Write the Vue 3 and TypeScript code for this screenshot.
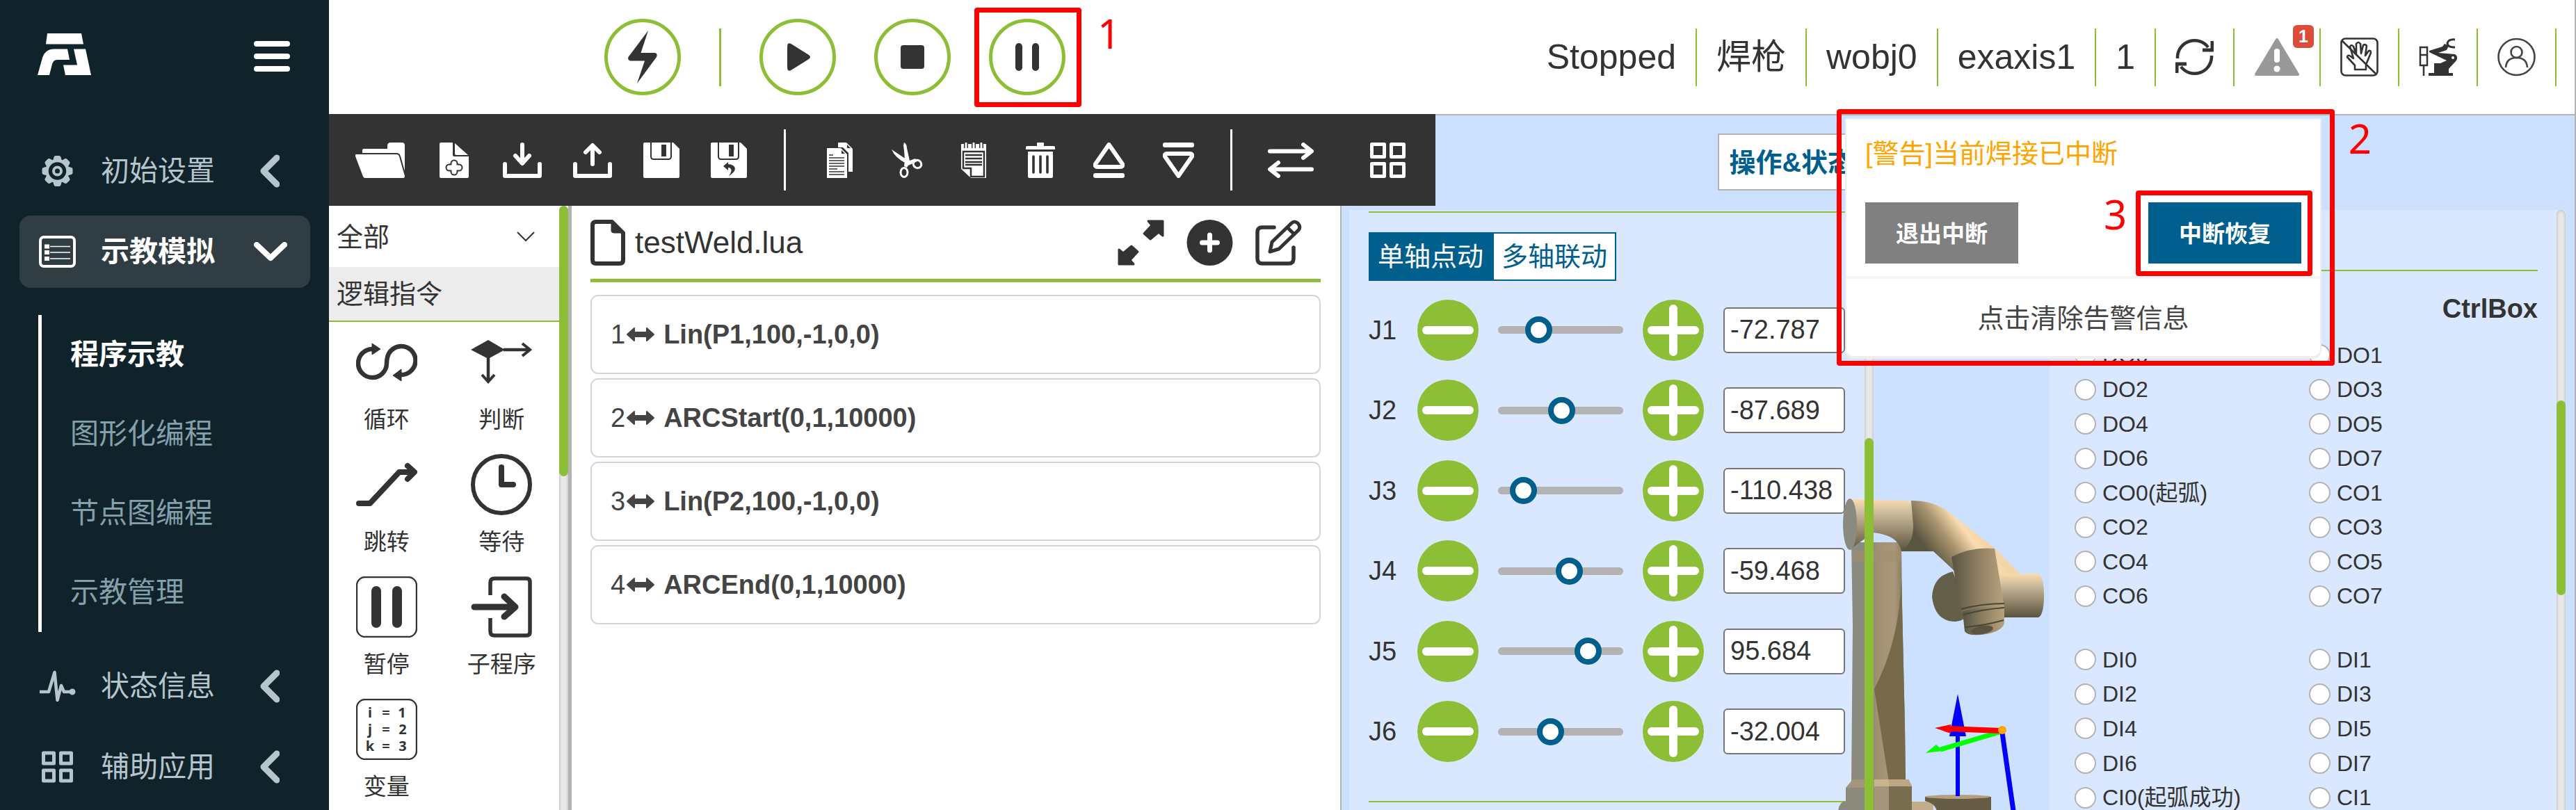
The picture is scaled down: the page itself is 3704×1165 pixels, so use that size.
<script setup lang="ts">
import { ref } from 'vue'

interface Icon {
  name: string
  w: number
  body: string
}

interface Joint {
  name: string
  pos: number
  value: string
}

const INK = '#333'

const subMenu = ['程序示教', '图形化编程', '节点图编程', '示教管理']

const floppy =
  '<path fill="#fff" d="M2 0H43L52 9V49q0 2-2 2H2q-2 0-2-2V2q0-2 2-2Z"/>' +
  `<path fill="none" stroke="${INK}" stroke-width="2" d="M11 0V20q0 4 4 4H36q4 0 4-4V0"/>` +
  `<path fill="${INK}" d="M26 3h7v17h-7z"/>`

const fileTools: Icon[] = [
  {
    name: '打开',
    w: 76,
    body:
      '<path fill="#fff" d="M10 16V11q0-2 2-2H46V5q0-5 5-5H67q4 0 4 4V42L63 16Z"/>' +
      `<path fill="#fff" stroke="${INK}" stroke-width="2" d="M1 16H59q4 0 5 4L72 48q0 4-3 4H14q-3 0-4-3L-1 20q-1-4 2-4Z"/>`,
  },
  {
    name: '新建',
    w: 46,
    body:
      '<path fill="#fff" d="M2 0H19V18q0 2 2 2H42V49q0 2-2 2H2q-2 0-2-2V2q0-2 2-2ZM22 1L41 18H24q-2 0-2-2Z"/>' +
      `<path stroke="${INK}" stroke-width="11" stroke-linecap="round" d="M14 36H28M21 30V42"/>` +
      '<path stroke="#fff" stroke-width="7" stroke-linecap="round" d="M14 36H28M21 30V42"/>',
  },
  {
    name: '导入',
    w: 56,
    body: '<path fill="none" stroke="#fff" stroke-width="6" stroke-linecap="round" stroke-linejoin="round" d="M3 31V48H53V31M28 3V28M18 19L28 30L38 19"/>',
  },
  {
    name: '导出',
    w: 56,
    body: '<path fill="none" stroke="#fff" stroke-width="6" stroke-linecap="round" stroke-linejoin="round" d="M3 31V48H53V31M28 6V31M18 14L28 4L38 14"/>',
  },
  { name: '保存', w: 52, body: floppy },
  {
    name: '另存为',
    w: 52,
    body:
      floppy +
      `<path fill="${INK}" d="M18 34L25 28V31Q35 32 35 38Q34 43 26 48Q31 41 29 38Q28 36 25 36V40Z"/>`,
  },
]

const editTools: Icon[] = [
  {
    name: '复制',
    w: 37,
    body:
      '<path fill="#fff" d="M16 0H28L37 9V42H31V15L23 7H16Z"/><path fill="#fff" d="M0 8H20L29 17V51H0Z"/>' +
      `<path fill="${INK}" d="M29 3V8H34ZM21 11V16H26Z"/>` +
      `<path stroke="${INK}" stroke-width="1.4" d="M3 18H9M3 22H25M3 26H25M3 30H25M3 34H25M3 38H15M3 42H25M3 46H25"/>`,
  },
  {
    name: '剪切',
    w: 46,
    body:
      '<path fill="#fff" d="M19 0Q23 2 23 8L27 26L35 23L38 27L25 33L23 36L19 34Q21 24 18 4ZM1 10L25 26L22 30Q6 22 1 10Z"/>' +
      '<ellipse cx="19" cy="43" rx="5" ry="6.5" fill="none" stroke="#fff" stroke-width="3"/>' +
      '<ellipse cx="38" cy="31" rx="6" ry="5.5" transform="rotate(35 38 31)" fill="none" stroke="#fff" stroke-width="3"/>',
  },
  {
    name: '粘贴',
    w: 38,
    body:
      '<path fill="#fff" d="M0 2H36V51H14L0 38Z"/>' +
      `<path fill="none" stroke="${INK}" stroke-width="6" d="M7 0V8M18 0V8M29 0V8"/>` +
      '<path stroke="#fff" stroke-width="3" stroke-linecap="round" d="M7 1V8M18 1V8M29 1V8"/>' +
      `<path fill="none" stroke="${INK}" stroke-width="2.5" d="M3 13H33V49H14V37H3ZM6 18H30M6 23H30M6 28H30M6 32H30"/>`,
  },
  {
    name: '删除',
    w: 42,
    body:
      '<path fill="#fff" d="M16 5V1q0-1 1-1H25q1 0 1 1V5H40q2 0 2 2V10H0V7q0-2 2-2ZM3 13H39V49q0 2-2 2H5q-2 0-2-2Z"/>' +
      `<path stroke="${INK}" stroke-width="3.6" stroke-linecap="round" d="M11 20V43M21 20V43M31 20V43"/>`,
  },
  {
    name: '上移',
    w: 45,
    body: '<path fill="none" stroke="#fff" stroke-width="6" stroke-linejoin="round" d="M22.500 3L42 31q1 4-3 4H6q-4 0-3-4Z"/><rect y="44" width="45" height="7" rx="3" fill="#fff"/>',
  },
  {
    name: '下移',
    w: 45,
    body: '<path fill="none" stroke="#fff" stroke-width="6" stroke-linejoin="round" d="M22.500 48L42 20q1-4-3-4H6q-4 0-3 4Z"/><rect width="45" height="7" rx="3" fill="#fff"/>',
  },
]

const swapIcon =
  '<path fill="none" stroke="#fff" stroke-width="6" stroke-linecap="round" stroke-linejoin="round" d="M3 12.500H62M51 3L63 12.500L51 22M63 38.500H4M15 29L3 38.500L15 48"/>'
const gridIcon =
  '<path fill="none" stroke="#fff" stroke-width="5" stroke-linejoin="round" d="M2.500 2.500H20.500V20.500H2.500ZM30.500 2.500H48.500V20.500H30.500ZM2.500 30.500H20.500V48.500H2.500ZM30.500 30.500H48.500V48.500H30.500Z"/>'

const stroke = `fill="none" stroke="${INK}"`
const commands: { name: string; body: string }[] = [
  {
    name: '循环',
    body:
      `<path ${stroke} stroke-width="6.500" d="M24 25A20.500 20.500 0 1 0 44 46Q44 41 45 37A20.500 20.500 0 1 1 64 62"/>` +
      `<path fill="${INK}" stroke="${INK}" stroke-linejoin="round" d="M23 17L35 25L23 33ZM65 54L53 63L65 71Z"/>`,
  },
  {
    name: '判断',
    body:
      `<path fill="${INK}" d="M0 26L25 12L49 26L25 39Z"/>` +
      `<path ${stroke} stroke-width="4.500" d="M47 26H84M25 38V72"/>` +
      `<path ${stroke} stroke-width="4" d="M74 17L85 26L74 35M16 62L25 72L34 62"/>`,
  },
  {
    name: '跳转',
    body: `<path ${stroke} stroke-width="8" stroke-linecap="round" stroke-linejoin="round" d="M4 71H20L62 26H82M74 17L84 26L74 36"/>`,
  },
  {
    name: '等待',
    body:
      `<circle cx="44" cy="44" r="41" ${stroke} stroke-width="6"/>` +
      `<path ${stroke} stroke-width="8" stroke-linecap="round" stroke-linejoin="round" d="M44 19V44H61"/>`,
  },
  {
    name: '暂停',
    body:
      `<rect x="1" y="1" width="86" height="86" rx="12" ${stroke} stroke-width="2.400"/>` +
      `<path fill="${INK}" d="M22 21a7 7 0 0 1 14 0V67a7 7 0 0 1-14 0ZM52 21a7 7 0 0 1 14 0V67a7 7 0 0 1-14 0Z"/>`,
  },
  {
    name: '子程序',
    body:
      `<path ${stroke} stroke-width="5.500" d="M28 27V9q0-6 6-6H80q5 0 5 5V80q0 5-5 5H34q-6 0-6-6V60"/>` +
      `<path ${stroke} stroke-width="9" stroke-linecap="round" stroke-linejoin="round" d="M5 44H62M48 29L64 44L48 58"/>`,
  },
  {
    name: '变量',
    body:
      `<rect x="1" y="1" width="86" height="86" rx="12" ${stroke} stroke-width="2.400"/>` +
      `<g fill="${INK}" font-family="Noto Sans, sans-serif" font-size="20" font-weight="700" text-anchor="middle">` +
      '<text x="20" y="27">i</text><text x="43" y="27">=</text><text x="66" y="27">1</text>' +
      '<text x="20" y="51">j</text><text x="43" y="51">=</text><text x="67" y="51">2</text>' +
      '<text x="20" y="75">k</text><text x="43" y="75">=</text><text x="67" y="75">3</text></g>',
  },
]

const program = ['Lin(P1,100,-1,0,0)', 'ARCStart(0,1,10000)', 'Lin(P2,100,-1,0,0)', 'ARCEnd(0,1,10000)']

const joints = ref<Joint[]>([
  { name: 'J1', pos: 28, value: '-72.787' },
  { name: 'J2', pos: 51, value: '-87.689' },
  { name: 'J3', pos: 12, value: '-110.438' },
  { name: 'J4', pos: 59, value: '-59.468' },
  { name: 'J5', pos: 78, value: '95.684' },
  { name: 'J6', pos: 40, value: '-32.004' },
])

const outputs = [
  'DO0', 'DO1', 'DO2', 'DO3', 'DO4', 'DO5', 'DO6', 'DO7',
  'CO0(起弧)', 'CO1', 'CO2', 'CO3', 'CO4', 'CO5', 'CO6', 'CO7',
]
const inputs = ['DI0', 'DI1', 'DI2', 'DI3', 'DI4', 'DI5', 'DI6', 'DI7', 'CI0(起弧成功)', 'CI1']

const mode = ref<'single' | 'multi'>('single')
</script>

<template>
  <div class="app">
    <aside class="sidebar">
      <div class="brand">
        <svg width="77" height="60" viewBox="0 0 77 60" fill="#fff" role="img" aria-label="FR">
          <path d="M14 0H63L66 15.500H12Z" />
          <path d="M0 60L7 35Q11 22.400 24 22.400H43L46 38H28Q23 38 21 44L17 60Z" />
          <path d="M52 22.400H69L77 60H40L37 45.500H57Z" />
        </svg>
        <button class="burger" aria-label="菜单">
          <svg width="52" height="44" viewBox="0 0 52 44" stroke="#fff" stroke-width="8" stroke-linecap="round">
            <path d="M4 4H48M4 22H48M4 40H48" />
          </svg>
        </button>
      </div>
      <nav class="menu">
        <a href="#" class="item">
          <svg width="53" height="46" viewBox="-26.500 -23 53 46" fill="none" stroke="currentColor">
            <circle r="15" stroke-width="4.500" />
            <circle r="5.500" stroke-width="4" />
            <path
              v-for="a in 8"
              :key="a"
              :transform="`rotate(${a * 45})`"
              d="M-3.500 -16L-2.500 -19.500H2.500L3.500 -16Z"
              stroke-width="5"
              stroke-linejoin="round"
            />
          </svg>
          <span>初始设置</span>
          <svg class="chev" width="28" height="48" viewBox="0 0 28 48" fill="none" stroke="currentColor" stroke-width="9" stroke-linecap="round" stroke-linejoin="round">
            <path d="M24 5L5 24L24 43" />
          </svg>
        </a>
        <a href="#" class="item active">
          <svg width="53" height="46" viewBox="0 0 53 46" fill="none" stroke="currentColor">
            <rect x="2" y="2" width="49" height="42" rx="5" stroke-width="4" />
            <path d="M8 15.500H15M8 24H15M8 33H15" stroke-width="6" />
            <path d="M16 15.500H45M16 24H45M16 33H45" stroke-width="1.600" />
          </svg>
          <span>示教模拟</span>
          <svg class="chev down" width="48" height="28" viewBox="0 0 48 28" fill="none" stroke="currentColor" stroke-width="8" stroke-linecap="round" stroke-linejoin="round">
            <path d="M4 4L24 23L44 4" />
          </svg>
        </a>
        <div class="submenu">
          <a v-for="(s, i) in subMenu" :key="s" href="#" :class="{ on: i === 0 }">{{ s }}</a>
        </div>
        <a href="#" class="item">
          <svg width="53" height="46" viewBox="0 0 53 46" fill="none" stroke="currentColor" stroke-width="4.500" stroke-linejoin="round">
            <path d="M1 31H14L22.500 3L26.500 43L32 22L36 31H48" />
            <circle cx="48" cy="31" r="2.200" />
          </svg>
          <span>状态信息</span>
          <svg class="chev" width="28" height="48" viewBox="0 0 28 48" fill="none" stroke="currentColor" stroke-width="9" stroke-linecap="round" stroke-linejoin="round">
            <path d="M24 5L5 24L24 43" />
          </svg>
        </a>
        <a href="#" class="item">
          <svg width="53" height="46" viewBox="0 0 53 46" fill="none" stroke="currentColor" stroke-width="5" stroke-linejoin="round">
            <path d="M6.500 3H21.500V18H6.500ZM31.500 3H46.500V18H31.500ZM6.500 28H21.500V43H6.500ZM31.500 28H46.500V43H31.500Z" />
          </svg>
          <span>辅助应用</span>
          <svg class="chev" width="28" height="48" viewBox="0 0 28 48" fill="none" stroke="currentColor" stroke-width="9" stroke-linecap="round" stroke-linejoin="round">
            <path d="M24 5L5 24L24 43" />
          </svg>
        </a>
      </nav>
    </aside>

    <div class="main">
      <header class="header">
        <div class="transport">
          <button class="round" aria-label="使能">
            <svg width="42" height="76" viewBox="0 0 42 76" fill="#333">
              <path d="M29 0L18.500 32H39Q43 33 41 38L13 76L24 43.500H3Q-1 42 0.500 38Z" />
            </svg>
          </button>
          <i class="sep"></i>
          <button class="round" aria-label="启动">
            <svg width="40" height="40" viewBox="0 0 40 40" fill="#333">
              <path d="M6 1Q8-1 12 2L36 17Q40 20 36 23L12 38Q8 41 6 39Q5 38 5 34V6Q5 2 6 1Z" />
            </svg>
          </button>
          <button class="round" aria-label="停止">
            <svg width="34" height="34" viewBox="0 0 34 34" fill="#333"><rect width="34" height="34" rx="4" /></svg>
          </button>
          <div class="marked">
            <button class="round" aria-label="暂停">
              <svg width="34" height="40" viewBox="0 0 34 40" fill="#333">
                <rect width="10" height="40" rx="5" /><rect x="24" width="10" height="40" rx="5" />
              </svg>
            </button>
            <div class="callout around-pause"></div>
            <span class="digit digit-one">1</span>
          </div>
        </div>
        <div class="status">
          <span class="cell">Stopped</span>
          <span class="cell">焊枪</span>
          <span class="cell">wobj0</span>
          <span class="cell">exaxis1</span>
          <span class="cell">1</span>
          <span class="cell">
            <button aria-label="刷新">
              <svg width="55" height="56" viewBox="0 0 55 56" fill="none" stroke="#333" stroke-width="4.500">
                <path d="M3 30V27A24.500 24.500 0 0 1 47 14M52 26V29A24.500 24.500 0 0 1 8 42" />
                <path d="M53 5V18H39M2 51V38H16" stroke-width="5" />
              </svg>
            </button>
          </span>
          <span class="cell alert">
            <button aria-label="告警">
              <svg width="66" height="56" viewBox="0 0 66 56">
                <path fill="#999" stroke="#999" stroke-width="4" stroke-linejoin="round" d="M33 3L63 53H3Z" />
                <path stroke="#fff" stroke-width="8" stroke-linecap="round" d="M33 20V32" />
                <circle cx="33" cy="45" r="4.500" fill="#fff" />
              </svg>
            </button>
            <span class="badge">1</span>
            <section class="popup">
              <div class="warn">
                <p>[警告]当前焊接已中断</p>
                <div class="actions">
                  <button class="quit">退出中断</button>
                  <div class="marked">
                    <button class="resume">中断恢复</button>
                    <div class="callout around-resume"></div>
                    <span class="digit digit-three">3</span>
                  </div>
                </div>
              </div>
              <button class="clear">点击清除告警信息</button>
              <div class="callout around-popup"></div>
              <span class="digit digit-two">2</span>
            </section>
          </span>
          <span class="cell">
            <button aria-label="拖动">
              <svg width="55" height="56" viewBox="0 0 55 56" fill="none" stroke="#333" stroke-width="2.600" stroke-linejoin="round">
                <rect x="1.500" y="1.500" width="52" height="53" rx="6" />
                <path d="M3 5L51 52" />
                <path d="M21 46V40L10 28Q11 24 15 27L19 30L14 13Q16 9 19 13L23 24L23 9Q26 5 29 9L30 23L33 11Q36 9 38 12L36 26L41 19Q44 18 44 22L37 39V46Z" />
              </svg>
            </button>
          </span>
          <span class="cell">
            <button aria-label="机器人">
              <svg width="55" height="56" viewBox="0 0 55 56" fill="#333">
                <path d="M15 19L34 13L37 9L43 12L40 18L28 22L52 24Q57 27 54 33L43 45V51H49V55H14V51H22V37H31L40 33L15 21Z" />
                <path d="M52 3Q43 2 41 8Q41 14 52 14" fill="none" stroke="#333" stroke-width="3" />
                <path d="M2 14H12V40H2ZM2 25H12M7 40V55" fill="none" stroke="#333" stroke-width="2.500" />
                <circle cx="49" cy="29" r="2" fill="#fff" />
              </svg>
            </button>
          </span>
          <span class="cell">
            <button aria-label="用户">
              <svg width="55" height="56" viewBox="0 0 55 56" fill="none" stroke="#444" stroke-width="2.600">
                <circle cx="27.500" cy="28" r="26" />
                <circle cx="27.500" cy="21" r="8" />
                <path d="M12 43Q13 29 27.500 29Q42 29 43 43" />
              </svg>
            </button>
          </span>
        </div>
      </header>

      <div class="work">
        <div class="left">
          <div class="toolbar">
            <div class="group files">
              <button v-for="t in fileTools" :key="t.name" :aria-label="t.name">
                <svg :width="t.w" height="51" :viewBox="`0 0 ${t.w} 51`" fill="none" v-html="t.body"></svg>
              </button>
            </div>
            <i class="bar"></i>
            <div class="group edits">
              <button v-for="t in editTools" :key="t.name" :aria-label="t.name">
                <svg :width="t.w" height="51" :viewBox="`0 0 ${t.w} 51`" v-html="t.body"></svg>
              </button>
            </div>
            <i class="bar"></i>
            <div class="group views">
              <button aria-label="切换"><svg width="66" height="51" viewBox="0 0 66 51" v-html="swapIcon"></svg></button>
              <button aria-label="布局"><svg width="51" height="51" viewBox="0 0 51 51" v-html="gridIcon"></svg></button>
            </div>
          </div>

          <div class="panes">
            <div class="toolbox">
              <div class="palette">
                <label class="filter">
                  <select aria-label="指令分类"><option>全部</option></select>
                  <svg width="26" height="16" viewBox="0 0 26 16" fill="none" stroke="#333" stroke-width="2">
                    <path d="M1 2L13 14L25 2" />
                  </svg>
                </label>
                <h2>逻辑指令</h2>
                <div class="cmds">
                  <button v-for="c in commands" :key="c.name">
                    <svg width="88" height="88" viewBox="0 0 88 88" v-html="c.body"></svg>
                    <span>{{ c.name }}</span>
                  </button>
                </div>
              </div>
              <div class="scroll"><i class="thumb thumb-top"></i></div>
            </div>

            <div class="editor">
              <div class="file">
                <svg width="50" height="66" viewBox="0 0 50 66" fill="none" stroke="#333" stroke-width="6" stroke-linejoin="round">
                  <path d="M8 3H31L47 19V58Q47 63 42 63H8Q3 63 3 58V8Q3 3 8 3Z" />
                  <path d="M30 1L48 19H34Q30 19 30 16Z" fill="#333" stroke-width="1" />
                </svg>
                <span class="name">testWeld.lua</span>
                <button aria-label="展开">
                  <svg width="67" height="66" viewBox="0 0 67 66" fill="#333" stroke="#333" stroke-width="3" stroke-linejoin="round">
                    <path d="M44 2H65V23L59 18L47 28L38 20L49 8ZM23 64H2V43L8 48L20 38L29 46L18 58Z" />
                  </svg>
                </button>
                <button aria-label="添加">
                  <svg width="67" height="66" viewBox="0 0 67 66">
                    <circle cx="33.500" cy="33" r="33" fill="#333" />
                    <path stroke="#fff" stroke-width="7" stroke-linecap="round" d="M33.500 22V44M22.500 33H44.500" />
                  </svg>
                </button>
                <button aria-label="编辑">
                  <svg width="67" height="66" viewBox="0 0 67 66" fill="none" stroke="#333" stroke-width="5.500" stroke-linecap="round" stroke-linejoin="round">
                    <path d="M27 11H10Q3 11 3 18V56Q3 63 10 63H48Q55 63 55 56V40" />
                    <path d="M21 46L24 32L52 5Q56 1 61 5Q66 10 62 15L34 42ZM46 11L56 21" stroke-width="5" />
                  </svg>
                </button>
              </div>
              <ol class="lines">
                <li v-for="(line, i) in program" :key="i">
                  <span>{{ i + 1 }}</span>
                  <svg width="44" height="22" viewBox="0 0 44 22" fill="#444">
                    <path d="M3 11L13 2V8H31V2L41 11L31 20V14H13V20Z" stroke="#444" stroke-width="2" stroke-linejoin="round" />
                  </svg>
                  <b>{{ line }}</b>
                </li>
              </ol>
            </div>
          </div>
        </div>

        <div class="right">
          <div class="viewbar">
            <select aria-label="视图"><option>操作&amp;状态</option></select>
          </div>
          <div class="stage">
            <section class="panel">
              <div class="jog">
                <div class="modes">
                  <button :class="{ on: mode === 'single' }" @click="mode = 'single'">单轴点动</button>
                  <button :class="{ on: mode === 'multi' }" @click="mode = 'multi'">多轴联动</button>
                </div>
                <div class="joints">
                  <div v-for="j in joints" :key="j.name" class="joint">
                    <label :for="`val-${j.name}`">{{ j.name }}</label>
                    <button :aria-label="`${j.name} 减`">
                      <svg width="88" height="88" viewBox="0 0 88 88">
                        <circle cx="44" cy="44" r="44" fill="#8cbf36" />
                        <path stroke="#fff" stroke-width="12" stroke-linecap="round" d="M13 44H75" />
                      </svg>
                    </button>
                    <input v-model.number="j.pos" type="range" min="0" max="100" :aria-label="`${j.name} 位置`" />
                    <button :aria-label="`${j.name} 加`">
                      <svg width="88" height="88" viewBox="0 0 88 88">
                        <circle cx="44" cy="44" r="44" fill="#8cbf36" />
                        <path stroke="#fff" stroke-width="12" stroke-linecap="round" d="M13 44H75M44 13V75" />
                      </svg>
                    </button>
                    <input :id="`val-${j.name}`" v-model="j.value" type="text" />
                  </div>
                </div>
                <hr />
              </div>
              <div class="scroll"><i class="thumb thumb-rest"></i></div>
            </section>

            <div class="scene">
              <svg class="robot" width="310" height="466" viewBox="0 0 310 466">
                <defs>
                  <linearGradient id="tube" x1="0" y1="0" x2="0" y2="1">
                    <stop offset="0" stop-color="#fbdcae" /><stop offset=".25" stop-color="#cdbd9f" />
                    <stop offset=".7" stop-color="#8a7d62" /><stop offset="1" stop-color="#58543f" />
                  </linearGradient>
                  <linearGradient id="arm" gradientUnits="userSpaceOnUse" x1="130" y1="90" x2="190" y2="45">
                    <stop offset="0" stop-color="#5a553f" /><stop offset=".45" stop-color="#a8946f" />
                    <stop offset=".8" stop-color="#fbdcae" /><stop offset="1" stop-color="#f3d5a8" />
                  </linearGradient>
                  <linearGradient id="col" x1="0" y1="0" x2="1" y2="0">
                    <stop offset="0" stop-color="#8a8a80" /><stop offset=".42" stop-color="#8e8b7f" />
                    <stop offset=".46" stop-color="#a08f70" /><stop offset=".8" stop-color="#a8977a" />
                    <stop offset="1" stop-color="#807253" />
                  </linearGradient>
                  <linearGradient id="wrist" x1="0" y1="0" x2="1" y2="0">
                    <stop offset="0" stop-color="#575440" /><stop offset=".5" stop-color="#8e7f62" />
                    <stop offset="1" stop-color="#b7a27c" />
                  </linearGradient>
                </defs>
                <path fill="url(#col)" d="M22 80H94L95 170L99 344L100 425H22L24 200Z" />
                <path fill="#766a4b" d="M94 130L95 170L99 344L100 425H76L55 291Q92 220 94 130Z" />
                <path fill="#a28f70" d="M23 92H94V107Q60 110 23 107Z" opacity=".6" />
                <path fill="url(#tube)" d="M20 18L100 20Q112 21 112 30V90L94 93Q90 70 54 66L20 90Z" />
                <path fill="url(#arm)" d="M108 20Q142 20 164 38L228 88L266 127L210 165L168 119L140 93H94Q112 80 111 55Z" />
                <ellipse cx="20" cy="54" rx="10" ry="37" fill="#8a8a80" />
                <path fill="url(#tube)" d="M230 126L291 125Q299 130 299 156Q299 184 291 188H236Z" />
                <path fill="#645f49" d="M168 122Q140 128 138 158Q142 194 172 194Q188 192 190 180Z" />
                <path fill="url(#wrist)" d="M166 101Q195 86 228 89L242 173Q212 172 180 182Z" />
                <path fill="url(#wrist)" d="M182 180Q212 170 242 174V196Q240 207 216 212Q190 216 185 208Z" />
                <path fill="none" stroke="#4b4735" stroke-width="2" d="M180 176Q210 168 242 168M183 184Q212 176 242 174M185 202Q212 200 241 192" />
                <ellipse cx="210" cy="206" rx="16" ry="6" fill="#5c543f" transform="rotate(-10 210 206)" />
                <path fill="#a5967b" d="M24 421H104L109 431V466H14V433Z" />
                <path fill="#7a6e51" d="M76 421H104L109 431V466H76Z" />
                <path fill="#d8c19a" d="M55 421H104L109 431H55Z" opacity=".7" />
                <path fill="#8c8a7d" d="M14 433H55V466H3Q5 453 14 452Z" />
                <path fill="#c2ad89" d="M109 453H140V466H109Z" />
                <path fill="#675d45" d="M128 446H223V466H145Q142 455 128 452Z" />
                <ellipse cx="175" cy="446" rx="47" ry="3" fill="#b3a07c" />
                <path stroke="#00f" stroke-width="6" d="M175 356V445" />
                <path fill="#00f" d="M175 298L187 359H163Z" />
                <path stroke="#00f" stroke-width="7" d="M239 354L255 466" />
                <path stroke="#0f0" stroke-width="7" d="M235 353L150 378" />
                <path fill="#0f0" d="M129 383L144 371L154 380Z" />
                <path stroke="red" stroke-width="8" d="M236 351L160 348" />
                <path fill="red" d="M142 347L165 342V355Z" />
                <circle cx="239" cy="350" r="6" fill="orange" />
              </svg>
            </div>

            <section class="panel">
              <div class="io">
                <hr />
                <h3>CtrlBox</h3>
                <div class="ports outs">
                  <label v-for="p in outputs" :key="p"><input type="radio" :name="p" />{{ p }}</label>
                </div>
                <div class="ports ins">
                  <label v-for="p in inputs" :key="p"><input type="radio" :name="p" />{{ p }}</label>
                </div>
              </div>
              <div class="scroll"><i class="thumb thumb-mid"></i></div>
            </section>
          </div>
        </div>
      </div>
    </div>
  </div>
</template>

<style>
body {
  margin: 0;
  overflow: hidden;
}
</style>

<style scoped>
* {
  box-sizing: border-box;
}
.app {
  display: flex;
  height: 100vh;
  overflow: hidden;
  background: #fff;
  color: #333;
  font-family: 'Liberation Sans', 'Noto Sans CJK SC', sans-serif;
  font-size: 38px;
  line-height: 44px;
}
button {
  display: block;
  margin: 0;
  padding: 0;
  border: 0;
  background: none;
  color: inherit;
  font: inherit;
}
svg {
  display: block;
  flex: none;
}
a {
  text-decoration: none;
}
select {
  appearance: none;
  font: inherit;
  color: inherit;
}

.sidebar {
  flex: none;
  width: 473px;
  background: #10232a;
}
.brand {
  display: flex;
  justify-content: space-between;
  align-items: center;
  height: 164px;
  padding: 0 56px 8px 54px;
}
.burger {
  padding-top: 6px;
}
.menu {
  display: flex;
  flex-direction: column;
  gap: 12px;
  padding: 30px 27px 0 28px;
  font-size: 41px;
}
.item {
  display: flex;
  align-items: center;
  height: 104px;
  padding: 0 33px 0 28px;
  border-radius: 16px;
  color: #b6c5cd;
}
.item span {
  margin-left: 36px;
}
.item.active {
  background: #303e43;
  color: #fff;
  font-weight: 700;
}
.chev {
  margin-left: auto;
  margin-right: 11px;
}
.chev.down {
  margin-right: 0;
}
.submenu {
  display: flex;
  flex-direction: column;
  margin: 27px 0 14px 27px;
  border-left: 5px solid #fff;
  font-size: 41px;
}
.submenu a {
  height: 114px;
  padding-left: 41px;
  line-height: 114px;
  color: #83a0ab;
}
.submenu a.on {
  color: #fff;
  font-weight: 700;
}

.main {
  flex: 1;
  min-width: 0;
  display: flex;
  flex-direction: column;
  border-right: 2px solid #b3b3b3;
}
.header {
  display: flex;
  justify-content: space-between;
  align-items: center;
  height: 164px;
  padding: 0 26px 0 396px;
}
.transport {
  display: flex;
  align-items: center;
  gap: 55px;
}
.sep {
  width: 3px;
  height: 83px;
  background: #8cbf36;
}
.round {
  display: flex;
  align-items: center;
  justify-content: center;
  width: 110px;
  height: 110px;
  border: 5px solid #8cbf36;
  border-radius: 50%;
}
.marked {
  position: relative;
}
.callout {
  position: absolute;
  border: 7px solid red;
  border-radius: 4px;
  pointer-events: none;
}
.around-pause {
  inset: -16px -23px -17px -21px;
}
.around-popup {
  inset: -15px -21px -14px -14px;
}
.around-resume {
  inset: -17px -16px -18px -18px;
}
.digit {
  position: absolute;
  color: red;
  font-family: 'Noto Sans', sans-serif;
  font-size: 58px;
  line-height: 58px;
}
.digit-one {
  left: 156px;
  top: -8px;
}
.digit-two {
  right: -74px;
  top: -2px;
}
.digit-three {
  left: -64px;
  top: -12px;
}
.status {
  display: flex;
  font-size: 50px;
}
.cell {
  display: flex;
  align-items: center;
  height: 83px;
  padding: 0 28px;
  border-right: 2px solid #8cbf36;
}
.alert {
  position: relative;
}
.badge {
  position: absolute;
  right: 8px;
  top: -5px;
  width: 30px;
  height: 33px;
  border-radius: 6px;
  background: #dd4b39;
  color: #fff;
  font-size: 25px;
  font-weight: 700;
  line-height: 33px;
  text-align: center;
}
.popup {
  position: absolute;
  z-index: 10;
  right: -3px;
  top: 129px;
  width: 685px;
  height: 346px;
  border: 2px solid #eee;
  border-bottom-width: 4px;
  border-radius: 2px 2px 12px 12px;
  background: #fff;
  font-size: 38px;
}
.warn {
  height: 229px;
  padding: 27px 27px 0;
  border-bottom: 4px solid #f4f4f4;
}
.warn p {
  margin: 0;
  color: orange;
}
.actions {
  display: flex;
  justify-content: space-between;
  margin-top: 48px;
}
.quit,
.resume {
  width: 220px;
  height: 88px;
  padding-top: 4px;
  background: #808080;
  color: #fff;
  font-size: 33px;
  font-weight: 700;
}
.resume {
  background: #005f8d;
}
.clear {
  width: 100%;
  height: 111px;
  padding-top: 4px;
  color: #444;
}

.work {
  flex: 1;
  min-height: 0;
  display: grid;
  grid-template-columns: minmax(0, 1454fr) minmax(0, 1775fr);
}
.left {
  display: flex;
  flex-direction: column;
}
.toolbar {
  position: relative;
  z-index: 3;
  display: flex;
  align-items: center;
  height: 132px;
  margin-right: -137px;
  padding: 0 43px 0 38px;
  background: #333;
}
.group {
  display: flex;
}
.files {
  gap: 45px;
  margin-right: 53px;
}
.edits {
  gap: 55px;
  margin: 0 52px 0 59px;
}
.views {
  flex: 1;
  justify-content: space-between;
  margin-left: 51px;
}
.bar {
  width: 3px;
  height: 88px;
  background: #fff;
}
.panes {
  flex: 1;
  min-height: 0;
  display: flex;
}
.toolbox {
  flex: none;
  display: flex;
  width: 349px;
  border-right: 5px solid #b3b3b3;
}
.palette {
  flex: 1;
  min-width: 0;
}
.filter {
  display: flex;
  align-items: center;
  height: 88px;
  padding-right: 35px;
}
.filter select {
  flex: 1;
  height: 80px;
  padding: 2px 0 0 11px;
  border: 0;
  background: none;
}
.palette h2 {
  height: 79px;
  margin: 0;
  padding-left: 11px;
  border-bottom: 2px solid #8cbf36;
  background: #ececec;
  font-size: 38px;
  font-weight: 400;
  line-height: 78px;
}
.cmds {
  display: grid;
  grid-template-columns: 1fr 1fr;
  grid-auto-rows: 176px;
  padding-top: 14px;
}
.cmds button {
  display: flex;
  flex-direction: column;
  align-items: center;
  gap: 17px;
  font-size: 33px;
}
.scroll {
  position: relative;
  z-index: 2;
  flex: none;
  display: flex;
  flex-direction: column;
  width: 13px;
  border-radius: 7px 7px 0 0;
  background: #e8e8e8;
  box-shadow: inset 0 0 4px #aaa;
}
.thumb {
  border-radius: 7px;
  background: #8cbf36;
}
.thumb-top {
  height: 44%;
}
.thumb-rest {
  height: 66%;
  margin-top: 328px;
}
.thumb-mid {
  height: 280px;
  margin-top: 274px;
}
.editor {
  flex: 1;
  min-width: 0;
  padding: 0 28px 0 27px;
}
.file {
  display: flex;
  align-items: center;
  height: 110px;
  padding-right: 27px;
  border-bottom: 5px solid #8cbf36;
  font-size: 44px;
}
.file .name {
  margin-left: 14px;
  margin-right: auto;
}
.file button {
  margin-left: 32px;
}
.lines {
  display: flex;
  flex-direction: column;
  gap: 6px;
  margin: 18px 0 0;
  padding: 0;
  list-style: none;
}
.lines li {
  display: flex;
  align-items: center;
  height: 114px;
  padding-left: 27px;
  border: 2px solid #d2d6e0;
  border-radius: 11px;
  color: #444;
}
.lines b {
  margin-left: 11px;
}

.right {
  display: flex;
  flex-direction: column;
  border-top: 2px solid #b3b3b3;
  border-left: 2px solid #b3b3b3;
  background: #cce0ff;
}
.viewbar {
  display: flex;
  justify-content: center;
  height: 136px;
  padding-top: 26px;
}
.viewbar select {
  width: 692px;
  height: 82px;
  padding: 2px 15px 0;
  border: 2px solid #b3b3b3;
  border-radius: 0;
  background: #fff;
  color: #005f8d;
  font-weight: 700;
}
.stage {
  flex: 1;
  min-height: 0;
  display: flex;
  padding: 0 13px 0 11px;
}
.panel {
  flex: none;
  display: flex;
  background: #dae8ff;
}
.jog {
  width: 741px;
  padding: 2px 28px 0;
}
.modes {
  display: flex;
  padding-top: 28px;
  border-top: 2px solid #8cbf36;
}
.modes button {
  width: 178px;
  height: 70px;
  border: 2px solid #005f8d;
  background: #fff;
  color: #005f8d;
}
.modes .on {
  background: #005f8d;
  color: #fff;
}
.joints {
  display: grid;
  grid-template-rows: repeat(6, 1fr);
  height: 693px;
  margin-top: 13px;
}
.joint {
  display: flex;
  align-items: center;
  gap: 28px;
}
.joint label {
  width: 42px;
}
.joint input {
  margin: 0;
}
.joint input[type='text'] {
  width: 175px;
  height: 66px;
  padding: 0 8px;
  border: 2px solid #767676;
  border-radius: 6px;
  background: #fff;
  color: #333;
  font: inherit;
}
.joint input[type='range'] {
  flex: 1;
  min-width: 0;
  height: 11px;
  appearance: none;
  border-radius: 6px;
  background: #b3b3b3;
}
.joint input[type='range']::-webkit-slider-thumb {
  appearance: none;
  width: 39px;
  height: 39px;
  border: 8px solid #005f8d;
  border-radius: 50%;
  background: #fff;
}
hr {
  height: 2px;
  margin: 42px 0 0;
  border: 0;
  background: #8cbf36;
}
.scene {
  position: relative;
  z-index: 1;
  flex: 1;
}
.robot {
  position: absolute;
  left: -54px;
  top: 398px;
}
.io {
  width: 729px;
  padding: 44px 27px 0 28px;
}
.io h3 {
  margin: 32px 0 20px;
  font-size: 38px;
  text-align: right;
}
.ports {
  display: grid;
  grid-template-columns: 1fr 1fr;
  grid-auto-rows: 1fr;
  font-size: 32px;
}
.outs {
  height: 396px;
}
.ins {
  height: 248px;
  margin-top: 42px;
}
.ports label {
  display: flex;
  align-items: center;
  gap: 9px;
  padding-left: 8px;
}
.ports input {
  appearance: none;
  width: 31px;
  height: 31px;
  margin: 0;
  border: 2px solid #b3b3b3;
  border-radius: 50%;
  background: #fff;
}
</style>
